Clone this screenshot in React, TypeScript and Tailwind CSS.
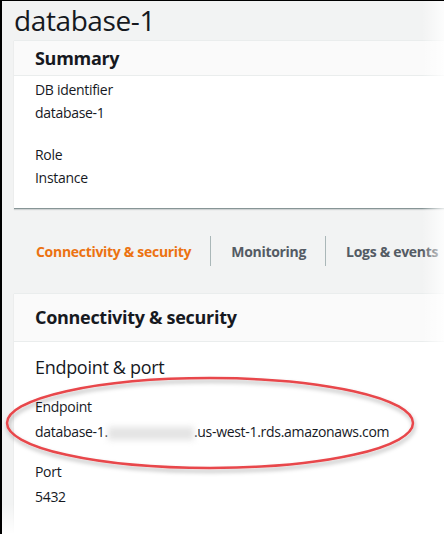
import React from 'react';

const font = { fontFamily: '"Open Sans", "Noto Sans", Arial, sans-serif' };

const Field = ({ label, value, gap = 'gap-[3px]' }: { label: string; value: React.ReactNode; gap?: string }) => (
  <div className={`flex flex-col ${gap} text-[14px] leading-[20px] text-[#16191f] tracking-[-0.3px]`}>
    <span>{label}</span>
    <span className="whitespace-nowrap">{value}</span>
  </div>
);

export default function App() {
  return (
    <div
      className="relative flex flex-col w-[444px] h-[534px] overflow-hidden bg-[#f2f3f3] border-l-2 border-t border-black"
      style={font}
    >
      <h1 className="h-[39px] shrink-0 pl-[12px] pt-[2px] text-[28px] leading-[34px] tracking-[-0.4px] text-[#16191f]">
        database-1
      </h1>

      {/* Summary panel */}
      <div className="shrink-0 ml-[12px] w-[460px] bg-white border-t border-[#eaeded] border-b border-b-[#879596] shadow-[0_1px_1px_rgba(0,28,36,0.15)]">
        <div className="h-[35px] flex items-center px-[21px] bg-[#fafafa] border-b border-[#eaeded]">
          <span className="text-[18px] font-bold tracking-[-0.3px] text-[#16191f]">Summary</span>
        </div>
        <div className="flex flex-col gap-[22px] px-[21px] pt-[4px] pb-[20px]">
          <Field label="DB identifier" value="database-1" />
          <Field label="Role" value="Instance" />
        </div>
      </div>

      {/* Tabs */}
      <div className="h-[84px] shrink-0 flex items-center pl-[34px] whitespace-nowrap text-[14px] font-bold tracking-[-0.3px]">
        <span className="text-[#ec7211]">Connectivity &amp; security</span>
        <span className="ml-[19px] mr-[20px] h-[30px] w-px shrink-0 bg-[#aab7b8]" />
        <span className="text-[#545b64]">Monitoring</span>
        <span className="ml-[19px] mr-[20px] h-[30px] w-px shrink-0 bg-[#aab7b8]" />
        <span className="text-[#545b64]">Logs &amp; events</span>
      </div>

      {/* Connectivity panel */}
      <div className="flex-1 ml-[12px] w-[460px] bg-white border-t border-[#eaeded] shadow-[0_1px_1px_rgba(0,28,36,0.15)]">
        <div className="h-[48px] flex items-center px-[21px] bg-[#fafafa] border-b border-[#eaeded]">
          <span className="text-[18px] font-bold tracking-[-0.3px] text-[#16191f]">Connectivity &amp; security</span>
        </div>
        <div className="flex flex-col px-[21px] pt-[12px]">
          <span className="text-[18px] leading-[26px] tracking-[-0.3px] text-[#16191f]">Endpoint &amp; port</span>
          <div className="flex flex-col gap-[20px] pt-[17px]">
            <Field
              gap="gap-[5px]"
              label="Endpoint"
              value={
                <>
                  database-1.
                  <span className="inline-block w-[86px] h-[13px] align-middle bg-[#e4e4e4] blur-[3px]" />
                  .us-west-1.rds.amazonaws.com
                </>
              }
            />
            <Field gap="gap-[5px]" label="Port" value="5432" />
          </div>
        </div>
      </div>

      {/* red highlight ellipse */}
      <svg className="absolute left-0 top-[370px]" width="444" height="110" viewBox="0 0 444 110">
        <defs>
          <filter id="sh" x="-10%" y="-30%" width="120%" height="160%">
            <feDropShadow dx="1" dy="3" stdDeviation="2" floodColor="#000" floodOpacity="0.3" />
          </filter>
        </defs>
        <ellipse cx="208" cy="52" rx="203" ry="45" fill="none" stroke="#e8474b" strokeWidth="2.5" filter="url(#sh)" />
      </svg>

      {/* torn right edge */}
      <div className="absolute right-0 top-0 h-full w-[22px] bg-gradient-to-r from-transparent to-white/80" />
      <div className="absolute left-0 bottom-0 w-[14px] h-[30px] bg-gradient-to-b from-transparent to-white" />
    </div>
  );
}
